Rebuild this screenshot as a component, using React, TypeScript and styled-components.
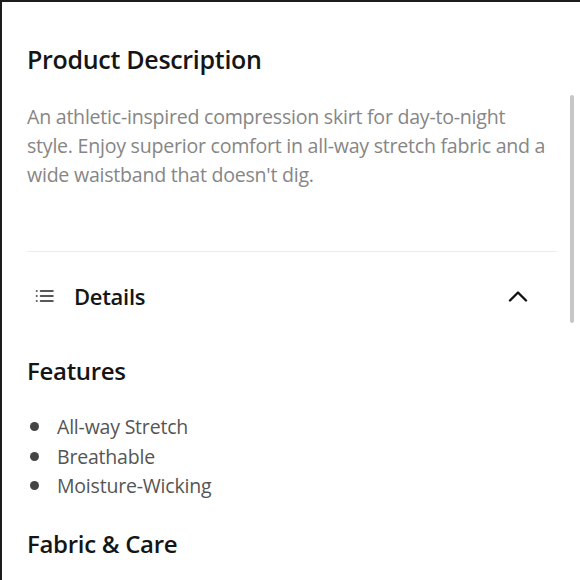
import styled, { createGlobalStyle } from "styled-components";

const GlobalStyle = createGlobalStyle`
  html, body {
    margin: 0;
    padding: 0;
    background: #ffffff;
  }
  * {
    box-sizing: border-box;
  }
`;

const Frame = styled.div`
  position: relative;
  width: 580px;
  height: 580px;
  overflow: hidden;
  background: #ffffff;
  border-top: 2px solid #1c1c1c;
  border-left: 2px solid #1c1c1c;
  font-family: "Open Sans", "Liberation Sans", sans-serif;
`;

const Content = styled.div`
  display: flex;
  flex-direction: column;
  padding: 41px 23px 0 25px;
`;

const Title = styled.h2`
  margin: 0;
  font-size: 25px;
  line-height: 32px;
  font-weight: 600;
  color: #151515;
  letter-spacing: -0.3px;
`;

const Description = styled.p`
  margin: 27px -12px 0 0;
  font-size: 19.6px;
  line-height: 29px;
  color: #868686;
  letter-spacing: -0.25px;
  white-space: nowrap;
`;

const Divider = styled.hr`
  margin: 62px 0 0;
  border: none;
  height: 1px;
  background: #ebebeb;
`;

const AccordionHeader = styled.div`
  display: flex;
  align-items: center;
  justify-content: space-between;
  height: 88px;
  padding: 0 29px 0 8px;
`;

const HeaderLabel = styled.div`
  display: flex;
  align-items: center;
  gap: 19px;
  font-size: 22px;
  font-weight: 600;
  color: #151515;
  letter-spacing: -0.3px;
`;

const SectionTitle = styled.h3<{ $top: number }>`
  margin: ${(p) => p.$top}px 0 0;
  font-size: 24px;
  line-height: 32px;
  font-weight: 600;
  color: #151515;
  letter-spacing: -0.3px;
`;

const BulletList = styled.ul`
  list-style: none;
  margin: 25px 0 0;
  padding: 0;
  display: flex;
  flex-direction: column;
`;

const BulletItem = styled.li`
  display: flex;
  align-items: center;
  gap: 18px;
  height: 29.5px;
  padding-left: 3px;
  font-size: 19.5px;
  color: #555555;
  letter-spacing: -0.2px;

  &::before {
    content: "";
    width: 9px;
    height: 9px;
    border-radius: 50%;
    background: #444444;
  }
`;

const ScrollThumb = styled.div`
  position: absolute;
  top: 93px;
  right: 6px;
  width: 4px;
  height: 228px;
  border-radius: 2px;
  background: #c6c6c6;
`;

function ListIcon() {
  return (
    <svg width="20" height="16" viewBox="0 0 20 16" fill="none">
      <g stroke="#222" strokeWidth="1.5" strokeLinecap="round">
        <line x1="1.5" y1="3" x2="2" y2="3" />
        <line x1="1.5" y1="8" x2="2" y2="8" />
        <line x1="1.5" y1="13" x2="2" y2="13" />
        <line x1="5.5" y1="3" x2="18" y2="3" />
        <line x1="5.5" y1="8" x2="18" y2="8" />
        <line x1="5.5" y1="13" x2="18" y2="13" />
      </g>
    </svg>
  );
}

function ChevronUp() {
  return (
    <svg width="20" height="12" viewBox="0 0 20 12" fill="none">
      <path
        d="M2 10.5 L10 2.5 L18 10.5"
        stroke="#111"
        strokeWidth="2.4"
        strokeLinecap="round"
        strokeLinejoin="round"
      />
    </svg>
  );
}

const features = ["All-way Stretch", "Breathable", "Moisture-Wicking"];

function App() {
  return (
    <>
      <GlobalStyle />
      <Frame>
        <Content>
          <Title>Product Description</Title>
          <Description>
            An athletic-inspired compression skirt for day-to-night
            <br />
            style. Enjoy superior comfort in all-way stretch fabric and a
            <br />
            wide waistband that doesn't dig.
          </Description>
          <Divider />
          <AccordionHeader>
            <HeaderLabel>
              <ListIcon />
              Details
            </HeaderLabel>
            <ChevronUp />
          </AccordionHeader>
          <SectionTitle $top={15}>Features</SectionTitle>
          <BulletList>
            {features.map((f) => (
              <BulletItem key={f}>{f}</BulletItem>
            ))}
          </BulletList>
          <SectionTitle $top={27}>Fabric &amp; Care</SectionTitle>
        </Content>
        <ScrollThumb />
      </Frame>
    </>
  );
}

export default App;
